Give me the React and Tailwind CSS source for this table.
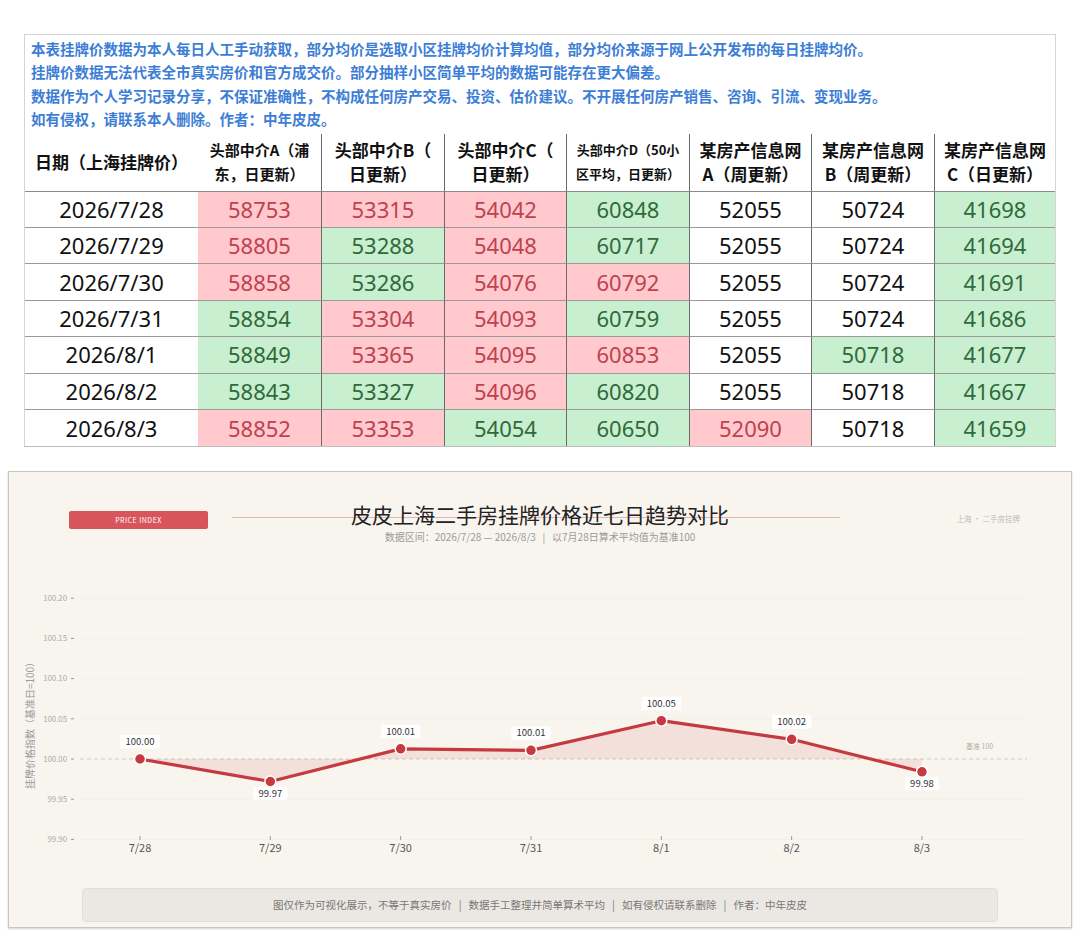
import React from "react";

const CJK = '"Noto Sans CJK SC", "Noto Sans", sans-serif';

// r = red (up), g = green (down), "" = unchanged
const rows = [
  ["2026/7/28", [58753, "r"], [53315, "r"], [54042, "r"], [60848, "g"], [52055, ""], [50724, ""], [41698, "g"]],
  ["2026/7/29", [58805, "r"], [53288, "g"], [54048, "r"], [60717, "g"], [52055, ""], [50724, ""], [41694, "g"]],
  ["2026/7/30", [58858, "r"], [53286, "g"], [54076, "r"], [60792, "r"], [52055, ""], [50724, ""], [41691, "g"]],
  ["2026/7/31", [58854, "g"], [53304, "r"], [54093, "r"], [60759, "g"], [52055, ""], [50724, ""], [41686, "g"]],
  ["2026/8/1", [58849, "g"], [53365, "r"], [54095, "r"], [60853, "r"], [52055, ""], [50718, "g"], [41677, "g"]],
  ["2026/8/2", [58843, "g"], [53327, "g"], [54096, "r"], [60820, "g"], [52055, ""], [50718, ""], [41667, "g"]],
  ["2026/8/3", [58852, "r"], [53353, "r"], [54054, "g"], [60650, "g"], [52090, "r"], [50718, ""], [41659, "g"]],
];

const headers = [
  { lines: ["日期（上海挂牌价）"], size: "text-[17px]" },
  { lines: ["头部中介A（浦", "东，日更新）"], size: "text-[15px]" },
  { lines: ["头部中介B（", "日更新）"], size: "text-[17px]" },
  { lines: ["头部中介C（", "日更新）"], size: "text-[17px]" },
  { lines: ["头部中介D（50小", "区平均，日更新）"], size: "text-[13px]" },
  { lines: ["某房产信息网", "A（周更新）"], size: "text-[17px]" },
  { lines: ["某房产信息网", "B（周更新）"], size: "text-[17px]" },
  { lines: ["某房产信息网", "C（日更新）"], size: "text-[17px]" },
];

const notes = [
  "本表挂牌价数据为本人每日人工手动获取，部分均价是选取小区挂牌均价计算均值，部分均价来源于网上公开发布的每日挂牌均价。",
  "挂牌价数据无法代表全市真实房价和官方成交价。部分抽样小区简单平均的数据可能存在更大偏差。",
  "数据作为个人学习记录分享，不保证准确性，不构成任何房产交易、投资、估价建议。不开展任何房产销售、咨询、引流、变现业务。",
  "如有侵权，请联系本人删除。作者：中年皮皮。",
];

const cellTone = {
  r: "bg-[#ffc9ce] text-[#c0414f]",
  g: "bg-[#c8efcf] text-[#2f6a3b]",
  "": "bg-white text-[#111]",
};

const gridCols = "grid grid-cols-[173px_123px_123px_122px_123px_122px_123px_1fr]";

function PriceTable() {
  return (
    <div className="ml-[24px] mt-[34px] w-[1032px] border-t border-l border-r border-[#d4d4d4] bg-white shadow-[0_1px_0_#bdbdbd]">
      {/* notes */}
      <div className="pl-[6px] pt-[2px] pb-[3px]" style={{ fontFamily: CJK }}>
        {notes.map((n) => (
          <div key={n} className="text-[14.5px] leading-[23.4px] font-bold text-[#3c7ed6] whitespace-nowrap">
            {n}
          </div>
        ))}
      </div>

      {/* header row */}
      <div className={gridCols} style={{ fontFamily: CJK }}>
        {headers.map((h, i) => (
          <div
            key={i}
            className={`h-[58px] flex flex-col items-center justify-center border-b border-[#8c8c8c] ${
              i > 1 ? "border-l border-l-[#6a6a6a]" : ""
            } font-bold text-[#111] ${h.size} leading-[24px] whitespace-nowrap`}
          >
            {h.lines.map((l) => (
              <span key={l}>{l}</span>
            ))}
          </div>
        ))}
      </div>

      {/* data rows */}
      {rows.map(([date, ...vals], ri) => (
        <div key={date} className={gridCols} style={{ fontFamily: '"Noto Sans", sans-serif' }}>
          <div
            className={`h-[36.4px] flex items-center justify-center bg-white text-[22px] text-[#111] ${
              ri < rows.length - 1 ? "border-b border-[#9a9a9a]" : ""
            }`}
          >
            {date}
          </div>
          {vals.map(([v, t], ci) => (
            <div
              key={ci}
              className={`h-[36.4px] flex items-center justify-center text-[22px] ${cellTone[t]} ${
                ci > 0 ? "border-l border-l-[#6a6a6a]" : ""
              } ${ri < rows.length - 1 ? "border-b border-[#9a9a9a]" : ""}`}
            >
              {v}
            </div>
          ))}
        </div>
      ))}
    </div>
  );
}

// chart data: index relative to first day's arithmetic mean
const labels = ["7/28", "7/29", "7/30", "7/31", "8/1", "8/2", "8/3"];
const sums = rows.map(([, ...vals]) => vals.reduce((s, [v]) => s + v, 0));
const idx = sums.map((s) => (s / sums[0]) * 100);
const X0 = 140;
const DX = 130.33;
const BASE_Y = 759;
const PER_UNIT = 804;
const yOf = (v) => BASE_Y - (v - 100) * PER_UNIT;
const pts = idx.map((v, i) => [X0 + i * DX, yOf(v)]);
const ticks = [100.2, 100.15, 100.1, 100.05, 100.0, 99.95, 99.9];

function TrendChart() {
  const line = pts.map((p) => p.join(",")).join(" ");
  const area = `${line} ${pts[pts.length - 1][0]},${BASE_Y} ${pts[0][0]},${BASE_Y}`;
  return (
    <svg
      width="1062"
      height="310"
      viewBox="9 560 1062 310"
      className="block mt-[17px]"
      style={{ fontFamily: CJK }}
    >
      <text
        x="34"
        y="723"
        transform="rotate(-90 34 723)"
        textAnchor="middle"
        fontSize="10"
        fill="#9a9a9a"
      >
        挂牌价格指数（基准日=100）
      </text>

      {ticks.map((t) => {
        const y = yOf(t);
        return (
          <g key={t}>
            {t !== 100 && <line x1="80" x2="1027" y1={y} y2={y} stroke="#f2efe9" strokeWidth="1" />}
            <text x="67" y={y + 2.8} textAnchor="end" fontSize="7.8" fill="#aaa">
              {t.toFixed(2)}
            </text>
            <line x1="71" x2="74" y1={y} y2={y} stroke="#999" strokeWidth="1" />
          </g>
        );
      })}

      <line x1="80" x2="1027" y1={BASE_Y} y2={BASE_Y} stroke="#cfcac2" strokeWidth="1" strokeDasharray="4 3" />
      <text x="966" y="749" fontSize="7" fill="#b0aca6">
        基准 100
      </text>

      <polygon points={area} fill="#d9534f" fillOpacity="0.13" />
      <polyline
        points={line}
        fill="none"
        stroke="#c53a40"
        strokeWidth="3.2"
        strokeLinejoin="round"
        strokeLinecap="round"
      />

      {pts.map(([x, y], i) => {
        const v = idx[i];
        const txt = v.toFixed(2);
        const below = v < 100;
        const ty = below ? y + 15 : y - 14;
        const w = txt.length * 5.6 + 6;
        return (
          <g key={i}>
            <line x1={x} x2={x} y1="836" y2="840" stroke="#999" strokeWidth="1" />
            <text x={x} y="852" textAnchor="middle" fontSize="11" fill="#555">
              {labels[i]}
            </text>
            <circle cx={x} cy={y} r="5.5" fill="#c53a40" stroke="#fff" strokeWidth="1.5" />
            <rect x={x - w / 2} y={ty - 10} width={w} height="13.5" fill="#fff" fillOpacity="0.9" rx="1" />
            <text x={x} y={ty} textAnchor="middle" fontSize="9.5" fill="#333">
              {txt}
            </text>
          </g>
        );
      })}
    </svg>
  );
}

function ChartCard() {
  return (
    <div
      className="mx-[8px] mt-[25px] h-[457px] border border-[#c6c6c6] bg-[#f8f5ef] shadow-[0_1px_2px_rgba(0,0,0,0.18)]"
      style={{ fontFamily: CJK }}
    >
      <div className="relative pt-[28px]">
        <div className="absolute left-[223px] top-[45px] w-[608px] h-px bg-[#e6b4b7]" />
        <div className="relative grid grid-cols-[1fr_auto_1fr]">
          <div className="pl-[60px] pt-[11px]">
            <div className="w-[139px] h-[18px] rounded-[2px] bg-[#d8555b] flex items-center justify-center text-[7px] tracking-[0.5px] text-white">
              PRICE INDEX
            </div>
          </div>
          <div className="flex flex-col items-center">
            <div className="text-[21px] leading-[28px] text-[#222]">皮皮上海二手房挂牌价格近七日趋势对比</div>
            <div className="mt-[2px] text-[10px] leading-[13px] text-[#9a9a9a] whitespace-pre">
              {"数据区间：2026/7/28 — 2026/8/3   |   以7月28日算术平均值为基准100"}
            </div>
          </div>
          <div className="flex justify-end pr-[51px] pt-[14px]">
            <span className="text-[7.5px] leading-[10px] text-[#bdbdbd]">上海 · 二手房挂牌</span>
          </div>
        </div>
      </div>

      <TrendChart />

      <div className="ml-[73px] mt-[18px] w-[916px] h-[34px] rounded-[4px] border border-[#e2ded7] bg-[#ebe8e3] flex items-center justify-center text-[10.5px] text-[#777] whitespace-pre">
        {"图仅作为可视化展示，不等于真实房价   |   数据手工整理并简单算术平均   |   如有侵权请联系删除   |   作者：中年皮皮"}
      </div>
    </div>
  );
}

export default function App() {
  return (
    <div className="w-[1080px] h-[936px] bg-white overflow-hidden">
      <PriceTable />
      <ChartCard />
    </div>
  );
}
